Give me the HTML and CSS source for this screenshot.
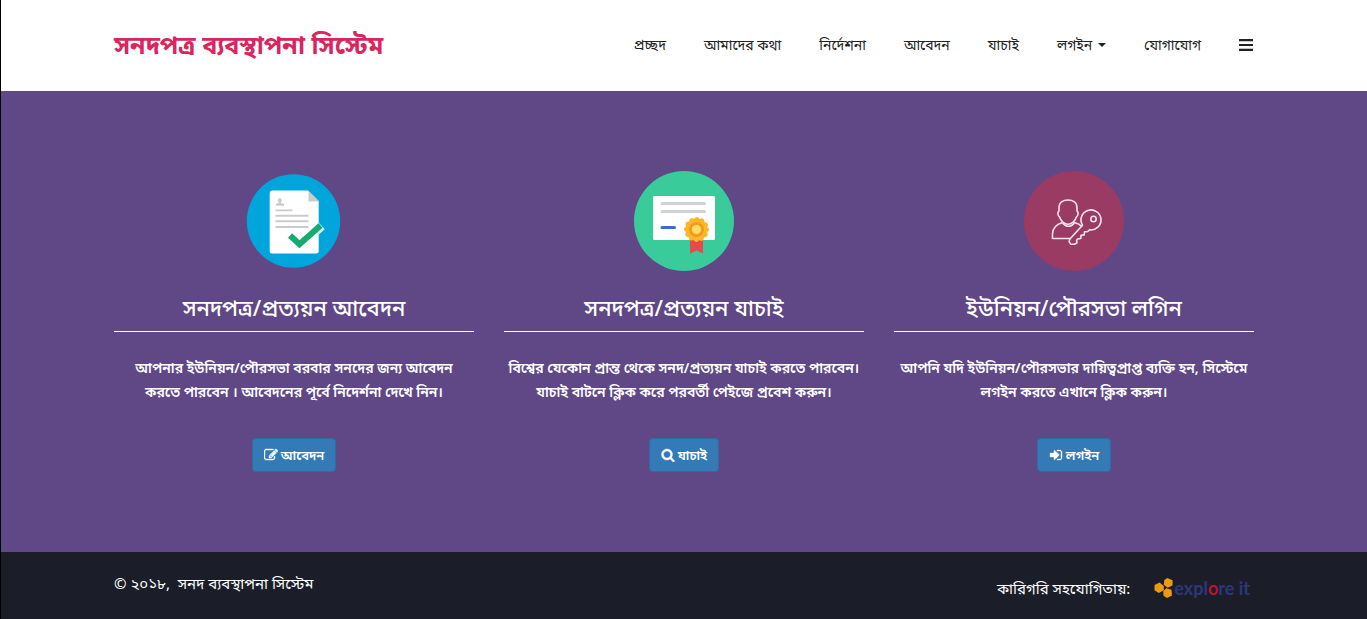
FILE: index.html
```html
<!DOCTYPE html>
<html lang="bn">
<head>
<meta charset="utf-8">
<meta name="viewport" content="width=device-width, initial-scale=1">
<title>সনদপত্র ব্যবস্থাপনা সিস্টেম</title>
<link rel="stylesheet" href="styles.css">
</head>
<body>
<header class="site-header">
  <div class="container header-inner">
    <a class="brand" href="#">সনদপত্র ব্যবস্থাপনা সিস্টেম</a>
    <nav class="menu">
      <a href="#">প্রচ্ছদ</a>
      <a href="#">আমাদের কথা</a>
      <a href="#">নির্দেশনা</a>
      <a href="#">আবেদন</a>
      <a href="#">যাচাই</a>
      <a href="#" class="has-caret">লগইন<span class="caret"></span></a>
      <a href="#">যোগাযোগ</a>
      <button class="bars" type="button" aria-label="মেনু"><svg width="14" height="12" viewBox="0 0 14 12"><path fill="#222" d="M0 0h14v2.200H0zM0 4.900h14v2.200H0zM0 9.800h14V12H0z"/></svg></button>
    </nav>
  </div>
</header>
<main class="services">
  <div class="container cards">
    <section class="card">
      <svg class="badge" viewBox="0 0 100 100" aria-hidden="true">
        <circle cx="49.500" cy="50" r="46.700" fill="#00a6db"/>
        <path fill="#fff" d="M28 19.500h36L74.700 30v50a2.500 2.500 0 0 1-2.500 2.500H28.200a2.500 2.500 0 0 1-2.500-2.500V22a2.500 2.500 0 0 1 2.300-2.500z"/>
        <path fill="#c9cbce" d="M64.500 20 74.700 30v.5H64.500z"/>
        <g fill="#c9cbce"><circle cx="35.800" cy="29.300" r="2"/><path d="M34.800 30h2v2l3.200 1v1.700h-8V33l2.800-1z"/><path d="M31.500 38.500h17v1.700h-17zM31.500 43.800h33v1.900h-33zM31.500 49.300h33v1.900h-33zM31.500 55h33v1.900h-33z"/></g>
        <path fill="none" stroke="#cff5f5" stroke-width="9" d="M71 61l6.800-6"/>
        <path fill="none" stroke="#16ac70" stroke-width="6" d="M46 64.500l9.500 8.800L76.500 54.500"/>
      </svg>
      <h2>সনদপত্র/প্রত্যয়ন আবেদন</h2>
      <p>আপনার ইউনিয়ন/পৌরসভা বরবার সনদের জন্য আবেদন<br>করতে পারবেন । আবেদনের পূর্বে নিদের্শনা দেখে নিন।</p>
      <a class="btn" href="#"><svg width="14" height="14" viewBox="0 0 1792 1792"><path fill="#fff" stroke="#fff" stroke-width="50" d="M888 1184l116-116-152-152-116 116v56h96v96h56zm440-720q-16-16-33 1l-350 350q-17 17-1 33t33-1l350-350q17-17 1-33zm80 594v190q0 119-84.500 203.500t-203.500 84.500h-832q-119 0-203.500-84.500t-84.500-203.500v-832q0-119 84.500-203.500t203.500-84.500h832q63 0 117 25 15 7 18 23 3 17-9 29l-49 49q-14 14-32 8-23-6-45-6h-832q-66 0-113 47t-47 113v832q0 66 47 113t113 47h832q66 0 113-47t47-113v-126q0-13 9-22l64-64q15-15 35-7t20 29zm-96-738l288 288-672 672h-288v-288zm444 132l-92 92-288-288 92-92q28-28 68-28t68 28l152 152q28 28 28 68t-28 68z"/></svg>আবেদন</a>
    </section>
    <section class="card">
      <svg class="badge" viewBox="0 0 100 100" aria-hidden="true">
        <circle cx="50" cy="50" r="50" fill="#3acb9a"/>
        <rect x="19" y="25" width="62" height="44" rx="1.500" fill="#fff"/>
        <path stroke="#cfd3d6" stroke-width="3" stroke-linecap="round" d="M28 32.500h42.500M28 40.500h42.500"/>
        <path stroke="#4167d8" stroke-width="3" stroke-linecap="round" d="M28 56.500h12.500"/>
        <path fill="#e54a4c" d="M56 66h13v16.500l-6.500-3-6.500 3z"/>
        <circle cx="62.500" cy="58.500" r="11.200" fill="#fbb62a"/>
        <circle cx="62.500" cy="58.500" r="10.500" fill="none" stroke="#fbb62a" stroke-width="4.200" stroke-linecap="round" stroke-dasharray=".1 5.397"/>
        <circle cx="62.500" cy="58.500" r="7.500" fill="#f39a1d"/><circle cx="62.500" cy="58.500" r="4.700" fill="#fddc65"/>
      </svg>
      <h2>সনদপত্র/প্রত্যয়ন যাচাই</h2>
      <p>বিশ্বের যেকোন প্রান্ত থেকে সনদ/প্রত্যয়ন যাচাই করতে পারবেন।<br>যাচাই বাটনে ক্লিক করে পরবর্তী পেইজে প্রবেশ করুন।</p>
      <a class="btn" href="#"><svg width="14" height="14" viewBox="0 0 1792 1792"><path fill="#fff" stroke="#fff" stroke-width="50" d="M1216 832q0-185-131.500-316.500t-316.500-131.500-316.500 131.500-131.500 316.500 131.500 316.500 316.500 131.500 316.500-131.500 131.500-316.500zm512 832q0 52-38 90t-90 38q-54 0-90-38l-343-342q-179 124-399 124-143 0-273.500-55.500t-225-150-150-225-55.500-273.500 55.500-273.500 150-225 225-150 273.500-55.500 273.500 55.500 225 150 150 225 55.500 273.500q0 220-124 399l343 343q37 37 37 90z"/></svg>যাচাই</a>
    </section>
    <section class="card">
      <svg class="badge" viewBox="0 0 100 100" aria-hidden="true">
        <circle cx="50" cy="50" r="50" fill="#993b62"/>
        <g fill="none" stroke="#fbe1ed" stroke-width="1.600" stroke-linejoin="round" stroke-linecap="round">
          <path d="M44 29c5 0 9 2.500 9 8v3c1.800 1 1.300 5-.6 6-1 4-4.800 7.200-8.400 7.200s-7.400-3.200-8.400-7.200c-1.900-1-2.400-5-.6-6v-3c0-5.500 4-8 9-8z"/>
          <path d="M38.500 51.500c-6.500 2-10 5.500-10 11.500v4.500h17.500M38.500 51.500c3 5 9 5 12 0 3 .8 5.500 2 7 3.700"/>
          <path d="M58.500 54.200a10 10 0 1 1 7 4.600l-1.800 1.700-3.200.4-.3 3-3.200.5-.2 3-3.200.6-1 1.300.4 2.500-2.600 1.500-3.700-.1-1.600-2.600.6-2.400 12.800-14z"/>
          <circle cx="69.500" cy="48" r="2.700"/>
        </g>
      </svg>
      <h2>ইউনিয়ন/পৌরসভা লগিন</h2>
      <p>আপনি যদি ইউনিয়ন/পৌরসভার দায়িত্বপ্রাপ্ত ব্যক্তি হন, সিস্টেমে<br>লগইন করতে এখানে ক্লিক করুন।</p>
      <a class="btn" href="#"><svg width="14" height="14" viewBox="0 0 1792 1792"><path fill="#fff" stroke="#fff" stroke-width="50" d="M1312 896q0 26-19 45l-544 544q-19 19-45 19t-45-19-19-45v-288h-448q-26 0-45-19t-19-45v-384q0-26 19-45t45-19h448v-288q0-26 19-45t45-19 45 19l544 544q19 19 19 45zm352-352v704q0 119-84.500 203.500t-203.500 84.500h-320q-13 0-22.500-9.500t-9.500-22.500q0-4-1-20t-.5-26.500 3-23.500 10-19.500 20.500-6.500h320q66 0 113-47t47-113v-704q0-66-47-113t-113-47h-312l-11.500-1-11.500-3-8-5.500-7-9-2-13.500q0-4-1-20t-.5-26.500 3-23.500 10-19.500 20.500-6.500h320q119 0 203.500 84.500t84.500 203.500z"/></svg>লগইন</a>
    </section>
  </div>
</main>
<footer class="site-footer">
  <div class="container footer-inner">
    <p class="copyright">© ২০১৮,&nbsp; সনদ ব্যবস্থাপনা সিস্টেম</p>
    <div class="support">
      <span>কারিগরি সহযোগিতায়:</span>
      <a class="partner" href="#"><svg width="20" height="20" viewBox="0 0 20 20" aria-hidden="true"><g fill="#eb9b12"><path d="M5.500 4.500 9.800 8v4.300L4.800 15 .5 12.200.6 7z"/><path d="M13.300 0 18.600 2.300 18.500 7.500 13.500 9.700 9.800 6.800 10.300 2z"/><path d="M12.300 10.200 17.500 11.700 18 17.500 13 20 9.500 17.800 9.300 13z"/></g></svg><span>expl<span class="partner-o">o</span>re it</span></a>
    </div>
  </div>
</footer>
</body>
</html>
```
FILE: styles.css
```css
* { box-sizing: border-box; }
body {
  margin: 0;
  min-height: 100vh;
  display: flex;
  flex-direction: column;
  border-left: 1px solid #000;
  background: #fff;
  color: #222;
  font-family: "Noto Sans", "Noto Sans Bengali", sans-serif;
  font-size: 15px;
  line-height: 24px;
}
a { color: inherit; text-decoration: none; }
.container { width: 100%; max-width: 1170px; margin: 0 auto; padding: 0 15px; }
.site-header { padding: 23px 0 26px; }
.header-inner { display: flex; align-items: center; justify-content: space-between; }
.brand { color: #d9265f; font-size: 25px; font-weight: 700; line-height: 42px; white-space: nowrap; }
.menu { display: flex; align-items: center; gap: 38px; padding-top: 2px; font-size: 14px; white-space: nowrap; }
.has-caret { display: flex; align-items: center; gap: 6px; }
.caret { border: 4px solid transparent; border-top-color: #222; border-bottom: 0; }
.bars { display: flex; padding: 0; margin-right: 1px; border: 0; background: none; }
.services { flex: 1 0 auto; background: #604887; color: #fff; padding: 80px 0; }
.cards { display: grid; grid-template-columns: repeat(3, minmax(0, 1fr)); gap: 30px; }
.card { display: flex; flex-direction: column; align-items: center; text-align: center; }
.badge { width: 100px; height: 100px; display: block; }
.card h2 { align-self: stretch; margin: 18px 0 24px; padding-bottom: 6px; border-bottom: 1px solid #fff; font-size: 22px; font-weight: 500; line-height: 36px; }
.card p { margin: 0 0 34px; font-size: 14px; font-weight: 600; }
.btn { display: flex; align-items: center; gap: 3px; padding: 4px 11px; border: 1px solid #2e6da4; border-radius: 4px; background: #337ab7; font-size: 13px; font-weight: 600; }
.site-footer { background: #1b1e29; color: #fff; padding: 19px 0; }
.footer-inner { display: flex; justify-content: space-between; align-items: flex-start; }
.copyright { margin: 0; }
.support { display: flex; align-items: center; gap: 24px; padding: 5px 4px 0 0; }
.partner { display: flex; align-items: center; color: #2c3878; font: 700 18px/20px Lato, sans-serif; }
.partner-o { color: #b9142f; }
```
